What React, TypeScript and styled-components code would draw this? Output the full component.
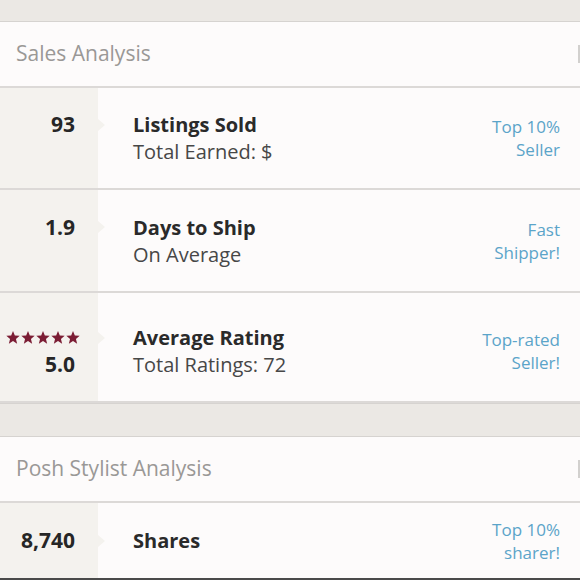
import React from 'react';
import styled, { createGlobalStyle } from 'styled-components';

const GlobalStyle = createGlobalStyle`
  html, body {
    margin: 0;
    padding: 0;
    background: #ebe8e4;
  }
  body {
    font-family: "Open Sans", "Noto Sans", Arial, sans-serif;
    -webkit-font-smoothing: antialiased;
  }
`;

// #region styled
const Page = styled.div`
  display: flex;
  flex-direction: column;
  width: 580px;
  height: 580px;
  overflow: hidden;
`;

const Band = styled.div<{ $h: number; $top?: boolean }>`
  background: #ebe8e4;
  border-bottom: 1px solid #d6d3d0;
  border-top: ${(p) => (p.$top ? '1px solid #d6d3d0' : 'none')};
  box-sizing: border-box;
  flex-shrink: 0;
  height: ${(p) => p.$h}px;
`;

const Header = styled.div`
  align-items: center;
  background: #fdfbfb;
  border-bottom: 2px solid #dcd9d7;
  box-sizing: border-box;
  color: #9a9896;
  display: flex;
  flex-shrink: 0;
  font-size: 21px;
  height: 66px;
  padding-bottom: 2px;
  padding-left: 16px;
  position: relative;

  &::after {
    background: #d2d0ce;
    content: '';
    height: 18px;
    position: absolute;
    right: 0;
    top: 50%;
    transform: translateY(-50%);
    width: 2px;
  }
`;

const Row = styled.div<{ $h: number; $shift?: number; $last?: boolean }>`
  background: #fdfbfb;
  border-bottom: ${(p) => (p.$last ? 'none' : '2px solid #dcd9d7')};
  box-sizing: border-box;
  display: flex;
  flex-shrink: 0;
  height: ${(p) => p.$h}px;

  & > * {
    padding-top: ${(p) => p.$shift ?? 0}px;
  }
`;

const NumberCell = styled.div`
  align-items: flex-end;
  background: #f4f2ee;
  box-sizing: border-box;
  display: flex;
  flex-direction: column;
  justify-content: center;
  padding-right: 23px;
  width: 98px;
`;

const NumberLine = styled.div`
  align-items: center;
  color: #262626;
  display: flex;
  font-size: 21px;
  font-weight: 700;
  height: 27px;
  line-height: 27px;
`;

const Stars = styled.div`
  color: #7b1d34;
  display: flex;
  gap: 1px;
  margin-right: -5px;
`;

const Middle = styled.div`
  display: flex;
  flex: 1;
  flex-direction: column;
  justify-content: center;
  padding-left: 35px;
`;

const Title = styled.div`
  color: #2a2a2a;
  font-size: 20px;
  font-weight: 700;
  line-height: 27px;
  position: relative;

  &::before {
    border-bottom: 6px solid transparent;
    border-left: 7px solid #f4f2ee;
    border-top: 6px solid transparent;
    content: '';
    left: -35px;
    position: absolute;
    top: 50%;
    transform: translateY(-50%);
  }
`;

const Sub = styled.div`
  color: #474747;
  font-size: 20px;
  line-height: 27px;
`;

const Badge = styled.div`
  color: #5ba4c9;
  display: flex;
  flex-direction: column;
  font-size: 17px;
  justify-content: center;
  line-height: 23px;
  padding-right: 20px;
  text-align: right;
`;

const Footer = styled.div`
  background: #4a4a4a;
  flex-shrink: 0;
  height: 4px;
`;
// #endregion

const Star: React.FC = () => (
  <svg width="14" height="13" viewBox="0.5 0 23 22">
    <path
      fill="currentColor"
      d="M12 0l3.1 7.6 8.2.6-6.3 5.3 2 8-7-4.4-7 4.4 2-8L.7 8.2l8.2-.6z"
    />
  </svg>
);

type Stat = {
  value: string;
  title: string;
  sub?: string;
  badge: [string, string];
  height: number;
  shift?: number;
  stars?: boolean;
};

const sales: Stat[] = [
  { value: '93', title: 'Listings Sold', sub: 'Total Earned: $', badge: ['Top 10%', 'Seller'], height: 102 },
  { value: '1.9', title: 'Days to Ship', sub: 'On Average', badge: ['Fast', 'Shipper!'], height: 103 },
  {
    value: '5.0',
    title: 'Average Rating',
    sub: 'Total Ratings: 72',
    badge: ['Top-rated', 'Seller!'],
    height: 110,
    shift: 8,
    stars: true,
  },
];

// the left column keeps one line per line of the middle column,
// so the number sits beside the title (or beside the sub line under the stars)
const StatRow: React.FC<{ stat: Stat; last?: boolean }> = ({ stat, last }) => (
  <Row $h={stat.height} $shift={stat.shift} $last={last}>
    <NumberCell>
      {stat.stars ? (
        <>
          <NumberLine>
            <Stars>
              {[0, 1, 2, 3, 4].map((i) => (
                <Star key={i} />
              ))}
            </Stars>
          </NumberLine>
          <NumberLine>{stat.value}</NumberLine>
        </>
      ) : (
        <>
          <NumberLine>{stat.value}</NumberLine>
          {stat.sub && <NumberLine />}
        </>
      )}
    </NumberCell>
    <Middle>
      <Title>{stat.title}</Title>
      {stat.sub && <Sub>{stat.sub}</Sub>}
    </Middle>
    <Badge>
      <span>{stat.badge[0]}</span>
      <span>{stat.badge[1]}</span>
    </Badge>
  </Row>
);

const App: React.FC = () => (
  <>
    <GlobalStyle />
    <Page>
      <Band $h={22} />
      <Header>Sales Analysis</Header>
      {sales.map((s) => (
        <StatRow key={s.title} stat={s} />
      ))}
      <Band $h={34} $top />
      <Header>Posh Stylist Analysis</Header>
      <StatRow
        stat={{ value: '8,740', title: 'Shares', badge: ['Top 10%', 'sharer!'], height: 75 }}
        last
      />
      <Footer />
    </Page>
  </>
);

export default App;
